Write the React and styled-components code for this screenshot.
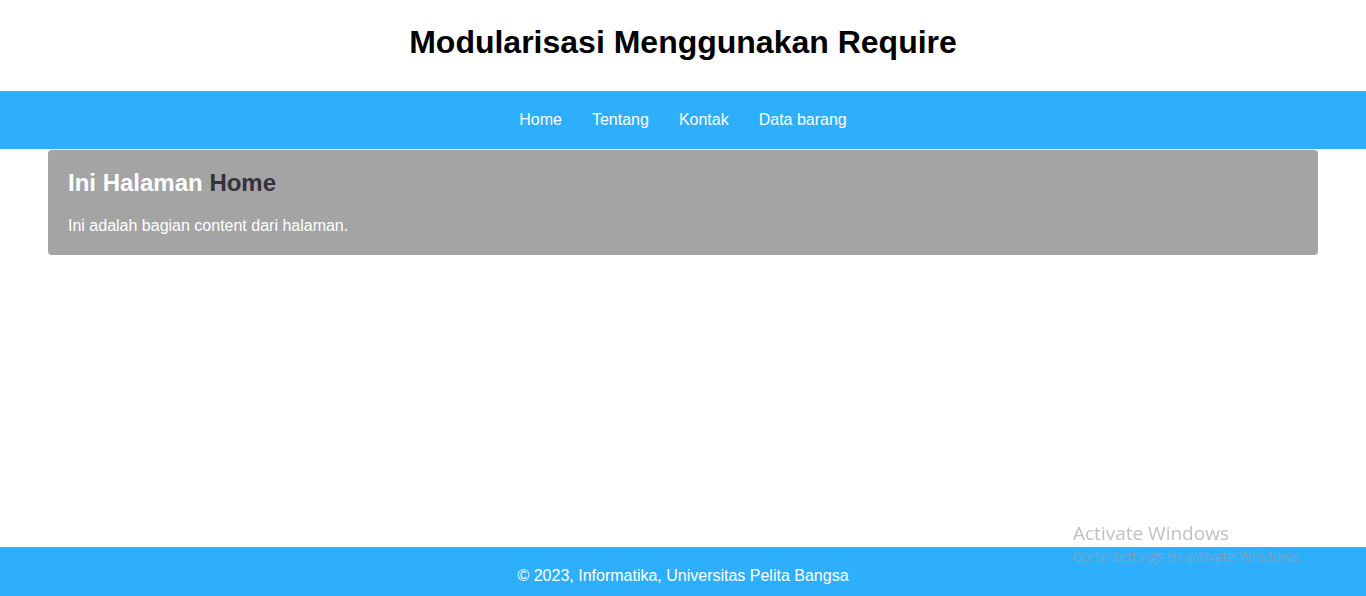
import React from "react";
import styled, { createGlobalStyle } from "styled-components";

const Global = createGlobalStyle`
  html, body { margin: 0; padding: 0; background: #fff; }
  body { font-family: "Liberation Sans", Arial, sans-serif; }
`;

const Page = styled.div`
  min-height: 596px;
  display: flex;
  flex-direction: column;
`;

const Header = styled.header`
  padding: 24px 0 31px;
  text-align: center;
`;

const Title = styled.h1`
  margin: 0;
  font-size: 32px;
  line-height: 36px;
  font-weight: bold;
  color: #000;
`;

const Nav = styled.nav`
  background: #2eaffd;
  height: 58px;
  display: flex;
  justify-content: center;
  align-items: flex-start;
  padding-top: 20px;
  box-sizing: border-box;
`;

const NavLink = styled.a`
  color: #fff;
  font-size: 16px;
  line-height: 18px;
  padding: 0 15px;
  text-decoration: none;
`;

const Main = styled.main`
  margin: 1px 48px 0;
  background: #a4a4a4;
  border-radius: 4px;
  padding: 19px 20px 20px;
`;

const Heading = styled.h2`
  margin: 0 0 20px;
  font-size: 24px;
  line-height: 28px;
  font-weight: bold;
  color: #fff;
`;

const Accent = styled.span`
  color: #36313b;
`;

const Text = styled.p`
  margin: 0;
  font-size: 16px;
  line-height: 18px;
  color: #fff;
`;

const Footer = styled.footer`
  margin-top: auto;
  background: #2eaffd;
  padding: 20px 0 11px;
  text-align: center;
  color: #fff;
  font-size: 16px;
  line-height: 18px;
`;

const Watermark = styled.div`
  position: fixed;
  left: 1073px;
  top: 520px;
  font-family: "Open Sans", "Noto Sans", sans-serif;
  color: rgba(140, 140, 140, 0.55);
  pointer-events: none;
`;

const WmTitle = styled.div`
  font-size: 19px;
  line-height: 27px;
`;

const WmSub = styled.div`
  font-size: 14px;
  line-height: 20px;
  color: rgba(150, 160, 170, 0.75);
`;

const links = ["Home", "Tentang", "Kontak", "Data barang"];

export default function App() {
  return (
    <Page>
      <Global />
      <Header>
        <Title>Modularisasi Menggunakan Require</Title>
      </Header>
      <Nav>
        {links.map((l) => (
          <NavLink key={l} href="#">{l}</NavLink>
        ))}
      </Nav>
      <Main>
        <Heading>
          Ini Halaman <Accent>Home</Accent>
        </Heading>
        <Text>Ini adalah bagian content dari halaman.</Text>
      </Main>
      <Footer>© 2023, Informatika, Universitas Pelita Bangsa</Footer>
      <Watermark>
        <WmTitle>Activate Windows</WmTitle>
        <WmSub>Go to Settings to activate Windows.</WmSub>
      </Watermark>
    </Page>
  );
}
